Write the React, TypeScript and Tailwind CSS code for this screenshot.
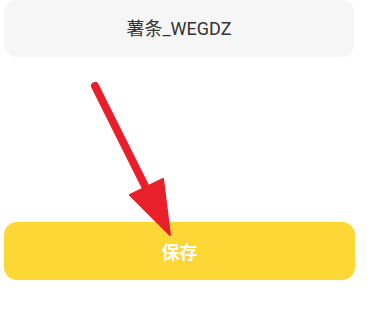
export default function App() {
  return (
    <div className="relative h-[313px] w-[371px] overflow-hidden bg-white font-['Roboto','Noto_Sans_CJK_SC',sans-serif]">
      <div className="ml-1 flex h-[57px] w-[350px] items-center justify-center rounded-[12px] bg-[#f6f6f6]">
        <span className="text-[18px] text-[#333333]">薯条_WEGDZ</span>
      </div>
      <button className="ml-1 mt-[165px] flex h-[58px] w-[351px] items-center justify-center rounded-[13px] bg-[#fdd735]">
        <span className="pt-[2px] text-[18px] font-bold text-white">保存</span>
      </button>
      <svg className="pointer-events-none absolute left-0 top-0" width="371" height="313" viewBox="0 0 371 313">
        <line x1="95" y1="86" x2="145" y2="186" stroke="#e8202b" strokeWidth="8" strokeLinecap="round" />
        <polygon points="130,195 163,179 170,235" fill="#e8202b" stroke="#e8202b" strokeWidth="2" strokeLinejoin="round" />
      </svg>
    </div>
  );
}
